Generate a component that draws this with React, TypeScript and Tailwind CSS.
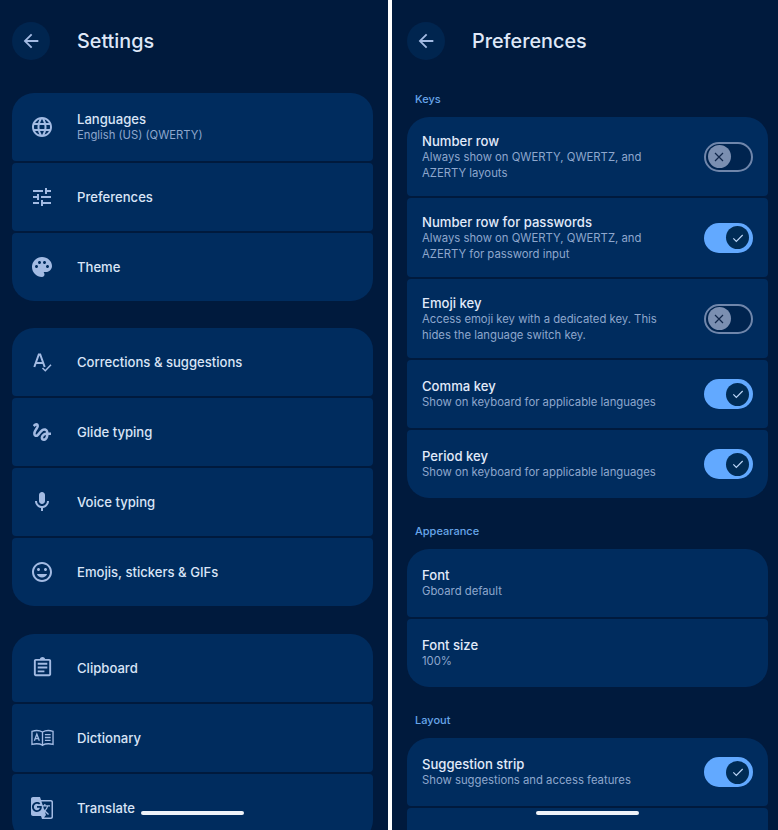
const font = "font-['Inter','Liberation_Sans',sans-serif]";

function Ic({ d, className = "h-6 w-6" }: { d: string; className?: string }) {
  return (
    <svg viewBox="0 0 24 24" className={"fill-[#a3bbe3] " + className}>
      <path d={d} />
    </svg>
  );
}

const icons = {
  globe:
    "M11.99 2C6.47 2 2 6.48 2 12s4.47 10 9.99 10C17.52 22 22 17.52 22 12S17.52 2 11.99 2zm6.93 6h-2.95c-.32-1.25-.78-2.45-1.38-3.56 1.84.63 3.37 1.91 4.33 3.56zM12 4.04c.83 1.2 1.48 2.53 1.91 3.96h-3.82c.43-1.43 1.08-2.76 1.91-3.96zM4.26 14C4.1 13.36 4 12.69 4 12s.1-1.36.26-2h3.38c-.08.66-.14 1.32-.14 2 0 .68.06 1.34.14 2H4.26zm.82 2h2.95c.32 1.25.78 2.45 1.38 3.56-1.84-.63-3.37-1.9-4.33-3.56zm2.95-8H5.08c.96-1.66 2.49-2.93 4.33-3.56C8.81 5.55 8.35 6.75 8.03 8zM12 19.96c-.83-1.2-1.48-2.53-1.91-3.96h3.82c-.43 1.43-1.08 2.76-1.91 3.96zM14.34 14H9.66c-.09-.66-.16-1.32-.16-2 0-.68.07-1.35.16-2h4.68c.09.65.16 1.32.16 2 0 .68-.07 1.34-.16 2zm.25 5.56c.6-1.11 1.06-2.31 1.38-3.56h2.95c-.96 1.65-2.49 2.93-4.33 3.56zM16.36 14c.08-.66.14-1.32.14-2 0-.68-.06-1.34-.14-2h3.38c.16.64.26 1.31.26 2s-.1 1.36-.26 2h-3.38z",
  tune:
    "M3 17v2h6v-2H3zM3 5v2h10V5H3zm10 16v-2h8v-2h-8v-2h-2v6h2zM7 9v2H3v2h4v2h2V9H7zm14 4v-2H11v2h10zm-6-4h2V7h4V5h-4V3h-2v6z",
  palette:
    "M12 2C6.49 2 2 6.49 2 12s4.49 10 10 10c1.38 0 2.5-1.12 2.5-2.5 0-.61-.23-1.2-.64-1.67-.08-.1-.13-.21-.13-.33 0-.28.22-.5.5-.5H16c3.31 0 6-2.69 6-6 0-4.96-4.49-9-10-9zm5.5 11c-.83 0-1.5-.67-1.5-1.5s.67-1.5 1.5-1.5 1.5.67 1.5 1.5-.67 1.5-1.5 1.5zm-3-4c-.83 0-1.5-.67-1.5-1.5S13.67 6 14.5 6s1.5.67 1.5 1.5S15.33 9 14.5 9zM5 11.5c0-.83.67-1.5 1.5-1.5s1.5.67 1.5 1.5S7.33 13 6.5 13 5 12.33 5 11.5zm6-4c0 .83-.67 1.5-1.5 1.5S8 8.33 8 7.5 8.67 6 9.5 6s1.5.67 1.5 1.5z",
  gesture:
    "M4.59 6.89c.7-.71 1.4-1.35 1.71-1.22.5.2 0 1.03-.3 1.52-.25.42-2.86 3.89-2.86 6.31 0 1.28.48 2.34 1.34 2.98.75.56 1.74.73 2.64.46 1.07-.31 1.95-1.4 3.06-2.77 1.21-1.49 2.83-3.44 4.08-3.44 1.63 0 1.65 1.01 1.76 1.79-3.78.64-5.38 3.67-5.38 5.37 0 1.7 1.44 3.09 3.21 3.09 1.63 0 4.29-1.33 4.69-6.1H21v-2.5h-2.47c-.15-1.65-1.09-4.2-4.03-4.2-2.25 0-4.18 1.91-4.94 2.84-.58.73-2.06 2.48-2.29 2.72-.25.3-.68.84-1.11.84-.45 0-.72-.83-.36-1.92.35-1.09 1.4-2.86 1.85-3.52.78-1.14 1.3-1.92 1.3-3.28C8.95 3.69 7.31 3 6.44 3 5.12 3 3.97 4 3.72 4.25c-.36.36-.66.66-.88.93l1.75 1.71zm9.29 11.66c-.31 0-.74-.26-.74-.72 0-.6.73-2.2 2.87-2.76-.3 2.69-1.43 3.48-2.13 3.48z",
  mic:
    "M12 14c1.66 0 3-1.34 3-3V5c0-1.66-1.34-3-3-3S9 3.34 9 5v6c0 1.66 1.34 3 3 3zm-1 7h2v-3.08c3.39-.49 6-3.39 6-6.92h-2c0 2.76-2.24 5-5 5s-5-2.24-5-5H5c0 3.53 2.61 6.43 6 6.92V21z",
  smile:
    "M11.99 2C6.47 2 2 6.48 2 12s4.47 10 9.99 10C17.52 22 22 17.52 22 12S17.52 2 11.99 2zM12 20c-4.42 0-8-3.58-8-8s3.58-8 8-8 8 3.58 8 8-3.58 8-8 8zm3.5-9c.83 0 1.5-.67 1.5-1.5S16.33 8 15.5 8 14 8.67 14 9.5s.67 1.5 1.5 1.5zm-7 0c.83 0 1.5-.67 1.5-1.5S9.33 8 8.5 8 7 8.67 7 9.5 7.67 11 8.5 11zm3.5 6.5c2.33 0 4.31-1.46 5.11-3.5H6.89c.8 2.04 2.78 3.5 5.11 3.5z",
  clipboard:
    "M19 3h-4.18C14.4 1.84 13.3 1 12 1s-2.4.84-2.82 2H5c-1.1 0-2 .9-2 2v14c0 1.1.9 2 2 2h14c1.1 0 2-.9 2-2V5c0-1.1-.9-2-2-2zm0 16H5V5h14v14zM7 7h10v2H7zm0 4h10v2H7zm0 4h7v2H7z",
  translate:
    "M21 4H11l-1-3H3c-1.1 0-2 .9-2 2v15c0 1.1.9 2 2 2h8l1 3h9c1.1 0 2-.9 2-2V6c0-1.1-.9-2-2-2zM7 16c-2.76 0-5-2.24-5-5s2.24-5 5-5c1.35 0 2.48.5 3.35 1.3L9.03 8.57c-.38-.36-1.04-.78-2.03-.78-1.74 0-3.15 1.44-3.15 3.21S5.26 14.21 7 14.21c2.01 0 2.84-1.44 2.92-2.41H7v-1.71h4.68c.07.31.12.61.12 1.02C11.8 13.97 9.89 16 7 16zm6.17-5.42h3.7c-.43 1.25-1.11 2.43-2.05 3.47-.31-.35-.6-.72-.86-1.1l-.79-2.37zm8.33 9.92c0 .55-.45 1-1 1H14l2-2.5-1.04-3.1 3.1 3.1.92-.92-3.3-3.25.02-.02c1.13-1.25 1.93-2.69 2.4-4.22H20v-1.3h-4.53V8h-1.29v1.29h-1.44L11.46 5.5h9.04c.55 0 1 .45 1 1v14z",
};

function SpellIcon() {
  return (
    <svg viewBox="0 0 24 24" className="h-6 w-6 fill-none stroke-[#a3bbe3]">
      <path d="M4.3 17 8.8 4.5h1.4L14.7 17M6.2 13h6.6" strokeWidth="2" />
      <path d="m12.5 18 2.8 2.8 5.7-6" strokeWidth="1.5" />
    </svg>
  );
}

function BookIcon() {
  return (
    <svg viewBox="0 0 24 24" className="h-[23px] w-[23px] fill-none stroke-[#a3bbe3]" strokeWidth="1.4">
      <path d="M1 5.5c4-1.2 8-1 11 .8V20c-3-1.6-7-1.8-11-.8zM23 5.5c-4-1.2-8-1-11 .8V20c3-1.6 7-1.8 11-.8z" />
      <path d="m3.5 15.5 2.6-7 2.6 7M4.5 13.2h3.2M14.5 9h6M14.5 12h6M14.5 15h6" />
    </svg>
  );
}

function Back() {
  return (
    <div className="flex h-[38px] w-[38px] items-center justify-center rounded-full bg-[#00254f]">
      <svg viewBox="0 0 24 24" className="h-[22px] w-[22px] fill-[#a3bbe3]">
        <path d="M20 11H7.83l5.59-5.59L12 4l-8 8 8 8 1.41-1.41L7.83 13H20v-2z" />
      </svg>
    </div>
  );
}

function Group({ children, className = "" }: { children: React.ReactNode; className?: string }) {
  return (
    <div className={"flex flex-col gap-[2px] overflow-hidden rounded-[22px] " + className}>{children}</div>
  );
}

function Row({ icon, title, sub }: { icon: React.ReactNode; title: string; sub?: string }) {
  return (
    <div className="flex h-[68.1px] items-center rounded-[4px] bg-[#002c5e] pl-[18px]">
      <div className="flex w-6 justify-center">{icon}</div>
      <div className="ml-[23px]">
        <div className="text-[13.1px] leading-4 font-medium text-[#d9e4f6]">{title}</div>
        {sub && <div className="text-[11.25px] leading-4 text-[#8ea7cd]">{sub}</div>}
      </div>
    </div>
  );
}

function Switch({ on }: { on: boolean }) {
  if (on) {
    return (
      <div className="flex h-[30px] w-[49.5px] shrink-0 items-center justify-end rounded-full bg-[#62a9ff] pr-[4px]">
        <div className="flex h-[23px] w-[23px] items-center justify-center rounded-full bg-[#002c55]">
          <svg viewBox="0 0 24 24" className="h-4 w-4 fill-none stroke-[#b9d4f5]" strokeWidth="1.8">
            <path d="m5 12.5 4.5 4.5L19 7.5" />
          </svg>
        </div>
      </div>
    );
  }
  return (
    <div className="flex h-[30px] w-[49.5px] shrink-0 items-center rounded-full border-2 border-[#6f86ab] bg-[#00244f] pl-[2px]">
      <div className="flex h-[23px] w-[23px] items-center justify-center rounded-full bg-[#7b8fb1]">
        <svg viewBox="0 0 24 24" className="h-4 w-4 fill-none stroke-[#10264a]" strokeWidth="1.8">
          <path d="m6 6 12 12M18 6 6 18" />
        </svg>
      </div>
    </div>
  );
}

function Pref({ title, lines, on, tall }: { title: string; lines: string[]; on?: boolean; tall?: boolean }) {
  return (
    <div className={"flex items-center rounded-[4px] bg-[#002c5e] pr-[15px] pl-[15px] " + (tall ? "h-[79.1px]" : "h-[68.1px]")}>
      <div className="flex-1">
        <div className="text-[13.1px] leading-4 font-medium text-[#e2eafa]">{title}</div>
        {lines.map((l) => (
          <div key={l} className="text-[11.3px] leading-4 text-[#8ea7cd]">{l}</div>
        ))}
      </div>
      {on !== undefined && <Switch on={on} />}
    </div>
  );
}

function Label({ children }: { children: React.ReactNode }) {
  return <div className="mb-[10px] pl-2 text-[11px] leading-4 font-medium text-[#68a6ea]">{children}</div>;
}

function HomeBar({ className }: { className: string }) {
  return <div className={"absolute bottom-[15px] h-[4px] w-[103px] rounded-full bg-[#eef2f8] " + className} />;
}

export default function App() {
  return (
    <div className={"flex h-[830px] w-[778px] overflow-hidden bg-white " + font}>
      {/* Settings */}
      <div className="relative h-full w-[388px] shrink-0 overflow-hidden bg-[#001a3d] pt-[22px] pr-[15px] pl-[12px]">
        <div className="flex h-[38px] items-center">
          <Back />
          <h1 className="ml-[27px] pt-[2px] text-[19.8px] font-medium text-[#dfe8f8]">Settings</h1>
        </div>
        <Group className="mt-[33px]">
          <Row icon={<Ic d={icons.globe} />} title="Languages" sub="English (US) (QWERTY)" />
          <Row icon={<Ic d={icons.tune} />} title="Preferences" />
          <Row icon={<Ic d={icons.palette} />} title="Theme" />
        </Group>
        <Group className="mt-[26.8px]">
          <Row icon={<SpellIcon />} title="Corrections & suggestions" />
          <Row icon={<Ic d={icons.gesture} />} title="Glide typing" />
          <Row icon={<Ic d={icons.mic} />} title="Voice typing" />
          <Row icon={<Ic d={icons.smile} />} title="Emojis, stickers & GIFs" />
        </Group>
        <Group className="mt-[27.3px]">
          <Row icon={<Ic d={icons.clipboard} className="h-[23px] w-[23px]" />} title="Clipboard" />
          <Row icon={<BookIcon />} title="Dictionary" />
          <Row icon={<Ic d={icons.translate} />} title="Translate" />
        </Group>
        <HomeBar className="left-[141px]" />
      </div>

      {/* Preferences */}
      <div className="relative ml-[4px] h-full flex-1 overflow-hidden bg-[#001a3d] pt-[22px] pr-[10px] pl-[15px]">
        <div className="flex h-[38px] items-center">
          <Back />
          <h1 className="ml-[27px] pt-[2px] text-[19.8px] font-medium text-[#dfe8f8]">Preferences</h1>
        </div>
        <div className="mt-[31px]">
          <Label>Keys</Label>
          <Group>
            <Pref tall on={false} title="Number row" lines={["Always show on QWERTY, QWERTZ, and", "AZERTY layouts"]} />
            <Pref tall on title="Number row for passwords" lines={["Always show on QWERTY, QWERTZ, and", "AZERTY for password input"]} />
            <Pref tall on={false} title="Emoji key" lines={["Access emoji key with a dedicated key. This", "hides the language switch key."]} />
            <Pref on title="Comma key" lines={["Show on keyboard for applicable languages"]} />
            <Pref on title="Period key" lines={["Show on keyboard for applicable languages"]} />
          </Group>
        </div>
        <div className="mt-[24.5px]">
          <Label>Appearance</Label>
          <Group>
            <Pref title="Font" lines={["Gboard default"]} />
            <Pref title="Font size" lines={["100%"]} />
          </Group>
        </div>
        <div className="mt-[24.8px]">
          <Label>Layout</Label>
          <Group>
            <Pref on title="Suggestion strip" lines={["Show suggestions and access features"]} />
            <Pref title="" lines={[]} />
          </Group>
        </div>
        <HomeBar className="left-[144px]" />
      </div>
    </div>
  );
}
